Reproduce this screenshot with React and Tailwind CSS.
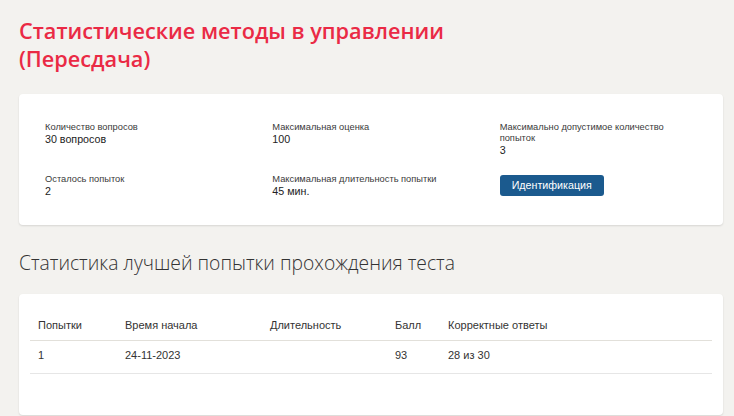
const info = [
  { label: 'Количество вопросов', value: '30 вопросов' },
  { label: 'Максимальная оценка', value: '100' },
  { label: 'Максимально допустимое количество попыток', value: '3' },
  { label: 'Осталось попыток', value: '2' },
  { label: 'Максимальная длительность попытки', value: '45 мин.' },
];

const rows = [{ n: '1', start: '24-11-2023', dur: '', score: '93', correct: '28 из 30' }];

const small = { fontFamily: '"Liberation Sans", Arial, sans-serif' };

export default function App() {
  return (
    <div
      className="min-h-[416px] bg-[#f3f2ef] pl-[19px] pr-[11px] pt-[17px] text-[#333]"
      style={{ fontFamily: '"Open Sans", "Noto Sans", sans-serif' }}
    >
      <h1 className="text-[21.7px] leading-[28px] font-semibold text-[#ea2a45]">
        Статистические методы в управлении
        <br />
        (Пересдача)
      </h1>

      <div
        className="mt-[21px] rounded bg-white px-[11px] pt-[28px] pb-[28px] shadow-[0_1px_2px_rgba(0,0,0,0.12)]"
        style={small}
      >
        <div className="grid grid-cols-3 gap-y-[18px]">
          {info.map((it) => (
            <div key={it.label} className="px-[15px]">
              <div className="text-[9.3px] leading-[11px] text-[#3a3a3a] pr-[24px]">{it.label}</div>
              <div className="text-[10.7px] leading-[12px] text-[#222]">{it.value}</div>
            </div>
          ))}
          <div className="flex items-start px-[15px] pt-[1px]">
            <button className="block h-[21px] rounded-[3px] bg-[#1b5a8e] px-[12px] text-[10.7px] leading-[21px] text-white">
              Идентификация
            </button>
          </div>
        </div>
      </div>

      <h2 className="mt-[24px] text-[19.3px] leading-[28px] font-light text-[#333]">
        Статистика лучшей попытки прохождения теста
      </h2>

      <div
        className="mt-[17px] h-[121px] rounded bg-white px-[11px] pt-[16px] shadow-[0_1px_2px_rgba(0,0,0,0.12)]"
        style={small}
      >
        <table className="w-full text-left text-[11px] text-[#333]">
          <thead>
            <tr className="border-b border-[#e2e0da]">
              <th className="w-[87px] px-[8px] pt-[8px] pb-[8px] leading-[14px] font-normal">Попытки</th>
              <th className="w-[145px] px-[8px] leading-[14px] font-normal">Время начала</th>
              <th className="w-[125px] px-[8px] leading-[14px] font-normal">Длительность</th>
              <th className="w-[53px] px-[8px] leading-[14px] font-normal">Балл</th>
              <th className="px-[8px] leading-[14px] font-normal">Корректные ответы</th>
            </tr>
          </thead>
          <tbody>
            {rows.map((r) => (
              <tr key={r.n} className="border-b border-[#e6e6e6]">
                <td className="px-[8px] pt-[7px] pb-[11px] leading-[14px]">{r.n}</td>
                <td className="px-[8px] pt-[7px] pb-[11px] leading-[14px]">{r.start}</td>
                <td className="px-[8px] pt-[7px] pb-[11px] leading-[14px]">{r.dur}</td>
                <td className="px-[8px] pt-[7px] pb-[11px] leading-[14px]">{r.score}</td>
                <td className="px-[8px] pt-[7px] pb-[11px] leading-[14px]">{r.correct}</td>
              </tr>
            ))}
          </tbody>
        </table>
      </div>
    </div>
  );
}
